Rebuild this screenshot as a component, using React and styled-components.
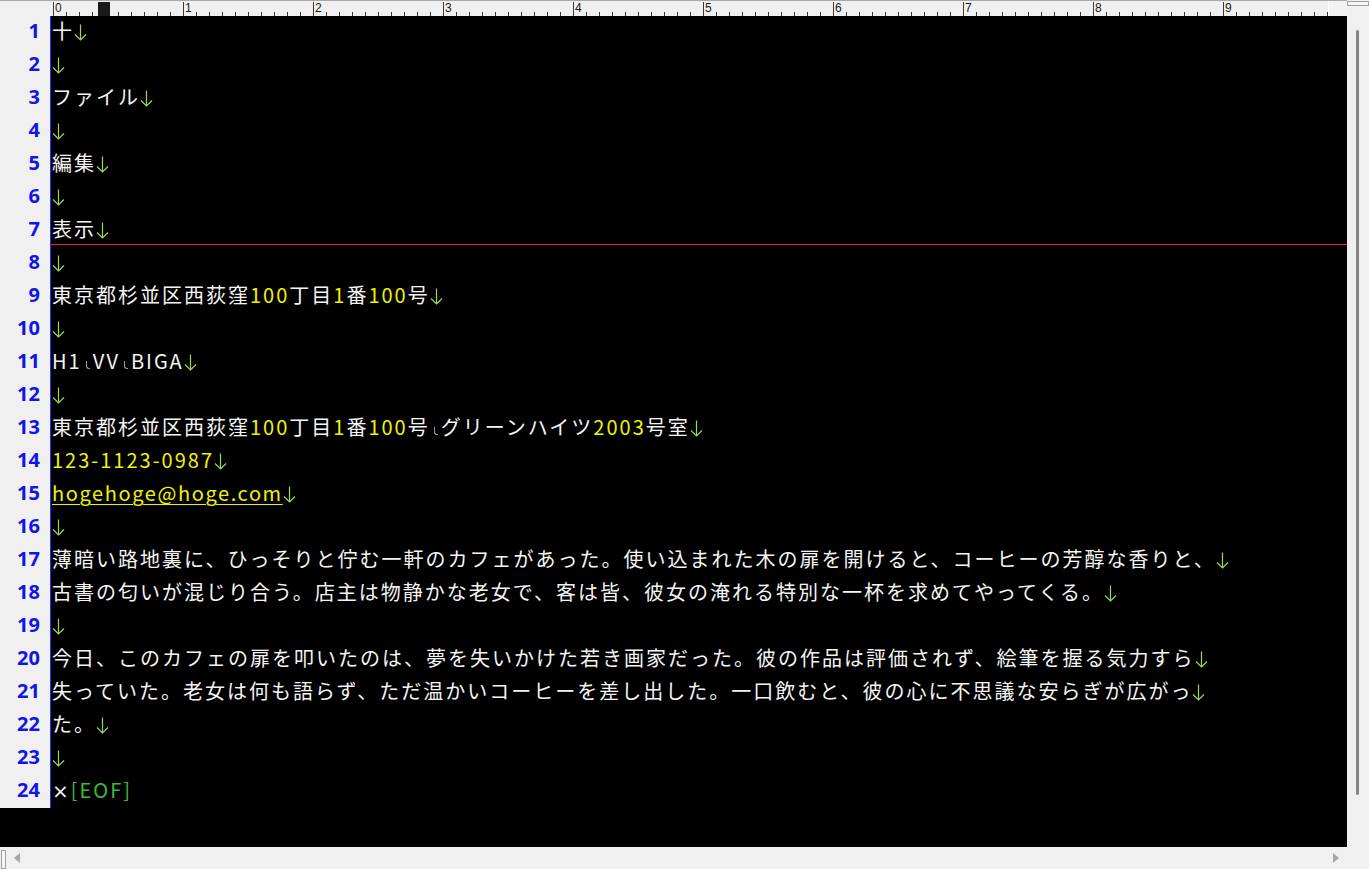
import React from "react"
import styled, { createGlobalStyle, css } from "styled-components"

const GlobalStyle = createGlobalStyle`
  html, body {
    margin: 0;
    padding: 0;
    background: #000;
  }
  body {
    font-family: "Noto Sans CJK JP", "Noto Sans", sans-serif;
  }
`

const Window = styled.div`
  width: 1369px;
  height: 869px;
  display: grid;
  grid-template-columns: 1347px 22px;
  grid-template-rows: 16px 831px 22px;
  overflow: hidden;
  background: #000;
`

/* ---------- ruler ---------- */

const Ruler = styled.div`
  grid-column: 1;
  grid-row: 1;
  display: flex;
  background: #f0f0f0;
  border-top: 1px solid #a8a8a8;
  box-sizing: border-box;
`

const RulerGutter = styled.div`
  width: 53px;
  flex-shrink: 0;
`

const RulerScale = styled.div`
  position: relative;
  width: 1275px;
  flex-shrink: 0;
  display: flex;
  overflow: hidden;
`

const RulerSegment = styled.div`
  position: relative;
  width: 130px;
  flex-shrink: 0;
  box-sizing: border-box;
  border-left: 1px solid #3a3a3a;
  margin-top: 1px;
  background-image: repeating-linear-gradient(
    to right,
    transparent 0 12px,
    #3a3a3a 12px 13px
  );
  background-size: 130px 4px;
  background-position: 0 100%;
  background-repeat: no-repeat;
`

const RulerLabel = styled.span`
  position: absolute;
  left: 1px;
  top: 0;
  font-family: "Liberation Sans", Arial, sans-serif;
  font-size: 12px;
  line-height: 13px;
  color: #1a1a1a;
`

const RulerCursor = styled.div`
  position: absolute;
  left: 45px;
  top: 1px;
  bottom: 0;
  width: 12px;
  background: #1a1a1a;
`

const RulerEnd = styled.div`
  flex: 1;
  border-left: 1px solid #ffffff;
  background: #f2f2f2;
`

/* ---------- vertical scrollbar ---------- */

const VScroll = styled.div`
  grid-column: 2;
  grid-row: 1 / span 2;
  position: relative;
  background: #f0f0f0;
`

const SplitBox = styled.div`
  position: absolute;
  ${({ $vertical }) =>
    $vertical
      ? css`
          left: 1px;
          top: 3px;
          width: 5px;
          bottom: 0;
        `
      : css`
          left: 0;
          right: 0;
          top: 1px;
          height: 5px;
        `}
  box-sizing: border-box;
  border: 1px solid #a0a0a0;
  background: #f6f6f6;
`

const VThumb = styled.div`
  position: absolute;
  left: 9px;
  top: 30px;
  height: 765px;
  width: 3px;
  border-radius: 2px;
  background: #858585;
`

/* ---------- editor ---------- */

const Editor = styled.div`
  grid-column: 1;
  grid-row: 2;
  display: flex;
  flex-direction: column;
  background: #000;
  overflow: hidden;
`

const Row = styled.div`
  display: flex;
  height: 33px;
  flex-shrink: 0;
`

const LineNo = styled.div`
  width: 51px;
  flex-shrink: 0;
  box-sizing: border-box;
  padding-right: 10px;
  text-align: right;
  background: #f0f0f0;
  border-right: 1px solid #2a2aff;
  font-family: "Noto Sans", "DejaVu Sans", sans-serif;
  font-weight: 700;
  font-size: 20px;
  line-height: 29px;
  color: #1414e8;
`

const Content = styled.div`
  position: relative;
  flex: 1;
  padding-left: 1px;
  white-space: pre;
  font-size: 20px;
  letter-spacing: 2px;
  line-height: 29px;
  color: #f4f4f4;

  ${({ $current }) =>
    $current &&
    css`
      &::after {
        content: "";
        position: absolute;
        left: 0;
        right: 0;
        bottom: 2px;
        height: 1px;
        background: #e02a2a;
      }
    `}
`

const Num = styled.span`
  color: #f2f200;
`

const Url = styled.span`
  color: #f2f200;
  letter-spacing: 1.6px;
  text-decoration: underline;
  text-underline-offset: 3px;
  text-decoration-thickness: 1px;
`

const Cross = styled.span`
  font-family: "DejaVu Sans", sans-serif;
`

const Eof = styled.span`
  color: #3cbc3c;
  letter-spacing: 2px;
`

const Space = styled.span`
  display: inline-block;
  position: relative;
  width: 11px;
  height: 10px;

  &::before {
    content: "";
    position: absolute;
    left: 4px;
    bottom: 0;
    width: 3px;
    height: 7px;
    border-left: 1px solid #9a9a9a;
    border-bottom: 1px solid #9a9a9a;
    border-bottom-left-radius: 3px;
  }
`

const ArrowSvg = styled.svg`
  display: inline-block;
  vertical-align: -2px;
  width: 13px;
  height: 17px;
`

const NewlineMark = () => (
  <ArrowSvg viewBox="0 0 13 17">
    <path
      d="M6.5 0.5 V16 M1 10.5 L6.5 16 L12 10.5"
      fill="none"
      stroke="#9fd84c"
      strokeWidth="1.2"
    />
  </ArrowSvg>
)

/* ---------- horizontal scrollbar ---------- */

const HScroll = styled.div`
  grid-column: 1 / span 2;
  grid-row: 3;
  position: relative;
  background: #f0f0f0;
`

const Arrow = styled.span`
  position: absolute;
  top: 6px;
  width: 0;
  height: 0;
  border-top: 5px solid transparent;
  border-bottom: 5px solid transparent;
  ${({ $dir }) =>
    $dir === "left"
      ? css`
          left: 14px;
          border-right: 6px solid #a6a6a6;
        `
      : css`
          left: 1333px;
          border-left: 6px solid #a6a6a6;
        `}
`

/* ---------- data ---------- */

const lines = [
  "十",
  "",
  "ファイル",
  "",
  "編集",
  "",
  "表示",
  "",
  "東京都杉並区西荻窪100丁目1番100号",
  "",
  "H1 VV BIGA",
  "",
  "東京都杉並区西荻窪100丁目1番100号 グリーンハイツ2003号室",
  "123-1123-0987",
  { url: "hogehoge@hoge.com" },
  "",
  "薄暗い路地裏に、ひっそりと佇む一軒のカフェがあった。使い込まれた木の扉を開けると、コーヒーの芳醇な香りと、",
  "古書の匂いが混じり合う。店主は物静かな老女で、客は皆、彼女の淹れる特別な一杯を求めてやってくる。",
  "",
  "今日、このカフェの扉を叩いたのは、夢を失いかけた若き画家だった。彼の作品は評価されず、絵筆を握る気力すら",
  "失っていた。老女は何も語らず、ただ温かいコーヒーを差し出した。一口飲むと、彼の心に不思議な安らぎが広がっ",
  "た。",
  "",
  { eof: true },
]

const CURRENT_LINE = 7

// split a line into plain text, number runs and half-width spaces
const renderText = (text) => {
  const parts = []
  const re = /(\d[\d-]*)|( )/g
  let last = 0
  let m
  while ((m = re.exec(text))) {
    const before = text.slice(last, m.index)
    if (m[1] && /[A-Za-z]$/.test(before)) continue
    if (before) parts.push(before)
    if (m[1]) parts.push(<Num key={m.index}>{m[1]}</Num>)
    else parts.push(<Space key={m.index} />)
    last = m.index + m[0].length
  }
  if (last < text.length) parts.push(text.slice(last))
  return parts
}

const renderLine = (line) => {
  if (line.eof) {
    return (
      <>
        <Cross>×</Cross>
        <Eof>[EOF]</Eof>
      </>
    )
  }
  if (line.url) {
    return (
      <>
        <Url>{line.url}</Url>
        <NewlineMark />
      </>
    )
  }
  return (
    <>
      {renderText(line)}
      <NewlineMark />
    </>
  )
}

const App = () => {
  return (
    <>
      <GlobalStyle />
      <Window>
        <Ruler>
          <RulerGutter />
          <RulerScale>
            {Array.from({ length: 10 }, (_, i) => (
              <RulerSegment key={i}>
                <RulerLabel>{i}</RulerLabel>
              </RulerSegment>
            ))}
            <RulerCursor />
          </RulerScale>
          <RulerEnd />
        </Ruler>

        <VScroll>
          <SplitBox />
          <VThumb />
        </VScroll>

        <Editor>
          {lines.map((line, i) => (
            <Row key={i}>
              <LineNo>{i + 1}</LineNo>
              <Content $current={i + 1 === CURRENT_LINE}>
                {renderLine(line)}
              </Content>
            </Row>
          ))}
        </Editor>

        <HScroll>
          <SplitBox $vertical />
          <Arrow $dir="left" />
          <Arrow $dir="right" />
        </HScroll>
      </Window>
    </>
  )
}

export default App
